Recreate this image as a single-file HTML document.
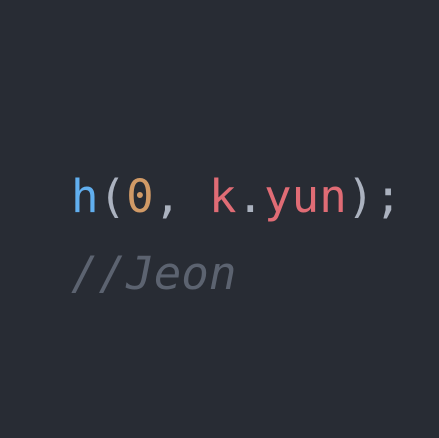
<!DOCTYPE html>
<html><head><style>
html,body{margin:0;padding:0;width:439px;height:438px;background:#282c34;overflow:hidden}
.l{position:absolute;left:71px;font-family:"DejaVu Sans Mono","Liberation Mono",monospace;font-size:45.8px;line-height:1;white-space:pre;color:#abb2bf}
.b{color:#61afef}.o{color:#d19a66}.r{color:#e06c75}
.c{color:#5c6370;font-style:italic}
</style></head><body>
<div class="l" style="top:174px"><span class="b">h</span>(<span class="o">0</span>, <span class="r">k</span>.<span class="r">yun</span>);</div>
<div class="l c" style="top:251px">//Jeon</div>
</body></html>
